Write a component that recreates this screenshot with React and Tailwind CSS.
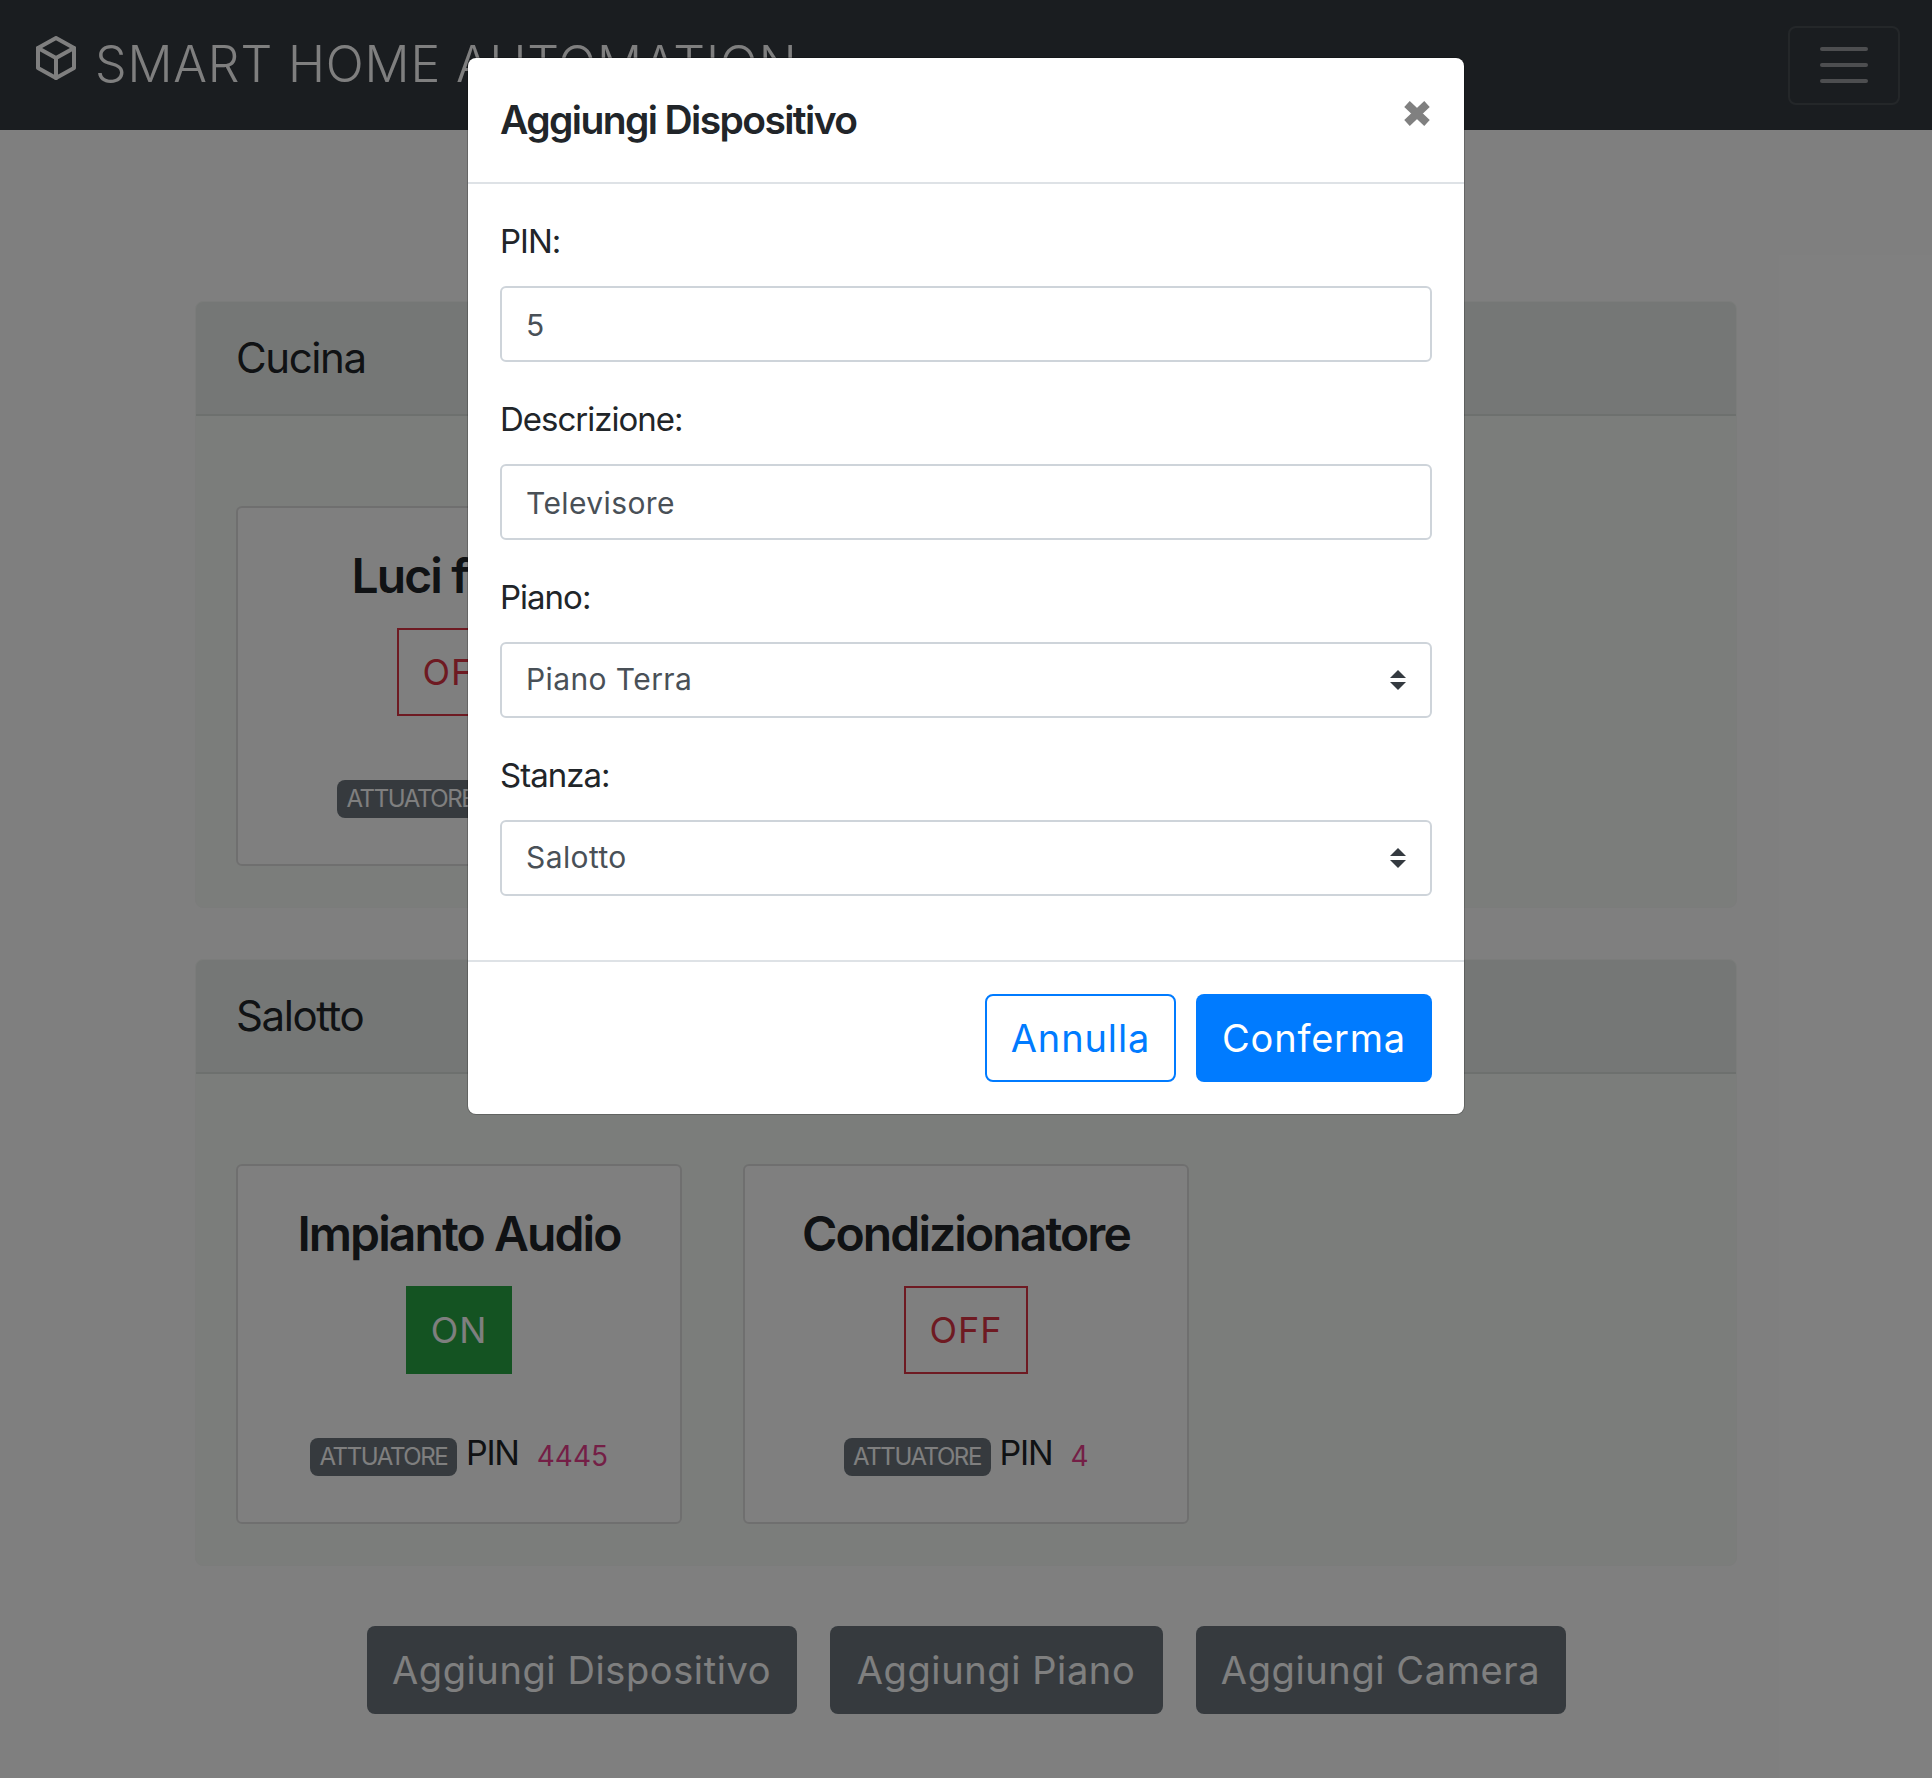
const FONT = { fontFamily: 'Inter, "Noto Sans", sans-serif' }

const ACTIONS = [
  { label: 'Aggiungi Dispositivo', width: 'w-[430px]' },
  { label: 'Aggiungi Piano', width: 'w-[333px]' },
  { label: 'Aggiungi Camera', width: 'w-[370px]' },
]

function CubeIcon() {
  return (
    <svg className="w-[40px] h-[44px]" viewBox="0 0 40 44" fill="none" stroke="currentColor" strokeWidth="4" strokeLinejoin="round" strokeLinecap="round">
      <path d="M20 2L38 12V32L20 42L2 32V12Z" />
      <path d="M2 12L20 22L38 12M20 22V42" />
    </svg>
  )
}

function DeviceCard({ title, on, pin }) {
  return (
    <div className="h-[360px] rounded-[6px] border-2 border-[#dfdfdf] bg-white flex flex-col items-center">
      <h5 className="mt-[38px] h-[60px] text-[48px] leading-[60px] font-semibold tracking-[-1.9px] text-[#212529]">{title}</h5>
      {on ? (
        <button className="mt-[22px] h-[88px] w-[106px] bg-[#28a745] text-white text-[36px] tracking-[1px]">ON</button>
      ) : (
        <button className="mt-[22px] h-[88px] w-[124px] border-2 border-[#dc3545] text-[#dc3545] text-[36px] tracking-[1px]">OFF</button>
      )}
      <div className="mt-[64px] flex items-center text-[#212529]">
        <span className="w-[147px] h-[38px] rounded-[8px] bg-[#6c757d] text-white text-[24px] leading-[38px] text-center tracking-[-1.4px]">ATTUATORE</span>
        <span className="ml-[9px] text-[34px] tracking-[-1.2px] leading-[38px] -mt-[8px]">PIN</span>
        <code className="ml-[18px] -mt-[2px] text-[28px] leading-[38px] text-[#e83e8c]" style={FONT}>{pin}</code>
      </div>
    </div>
  )
}

function Section({ name, children }) {
  return (
    <section className="rounded-[8px] border border-[#f6f8f6] bg-[#f6faf6]">
      <div className="h-[114px] pl-[40px] pb-[2px] flex items-center bg-[#eaefec] border-b-2 border-[#dbe0dd] rounded-t-[7px]">
        <h4 className="text-[42px] tracking-[-1.4px] text-[#212529]">{name}</h4>
      </div>
      <div className="px-[40px] pt-[90px] pb-[41px] grid grid-cols-3 gap-x-[61px]">{children}</div>
    </section>
  )
}

function Field({ label, children }) {
  return (
    <div className="mb-[32px]">
      <label className="block h-[48px] mb-[22px] pt-[1px] text-[33px] leading-[48px] tracking-[-1px] text-[#212529]">{label}</label>
      {children}
    </div>
  )
}

function SelectField({ value }) {
  return (
    <div className="relative">
      <select defaultValue={value} className="block w-full h-[76px] pl-[24px] pb-[2px] rounded-[6px] border-2 border-[#ced4da] bg-white text-[30px] tracking-[0.4px] text-[#495057] appearance-none">
        <option>{value}</option>
      </select>
      <svg className="absolute right-[26px] top-[28px] w-[16px] h-[20px]" viewBox="0 0 16 20">
        <path d="M8 0l8 8H0zM8 20L0 12h16z" fill="#343a40" />
      </svg>
    </div>
  )
}

const inputCls = 'block w-full h-[76px] px-[24px] pt-[2px] rounded-[6px] border-2 border-[#ced4da] bg-white text-[30px] tracking-[0.4px] text-[#495057]'

export default function App() {
  return (
    <div className="relative min-h-[1778px] bg-white overflow-hidden" style={FONT}>
      <nav className="h-[130px] bg-[#343a40] flex items-center justify-between pl-[36px] pr-[32px]">
        <div className="flex items-center text-white">
          <div className="-mt-[14px]"><CubeIcon /></div>
          <span className="ml-[19px] -mt-[2px] text-[50px] font-light tracking-[0.85px]">SMART HOME AUTOMATION</span>
        </div>
        <button className="w-[112px] h-[79px] rounded-[8px] border-2 border-[#ffffff1a] flex flex-col items-center justify-center gap-[12px]">
          <span className="w-[48px] h-[4px] rounded-full bg-[#ffffff80]" />
          <span className="w-[48px] h-[4px] rounded-full bg-[#ffffff80]" />
          <span className="w-[48px] h-[4px] rounded-full bg-[#ffffff80]" />
        </button>
      </nav>

      <main className="pt-[171px] px-[195px]">
        <div className="flex flex-col gap-[51px]">
          <Section name="Cucina">
            <DeviceCard title="Luci forno" pin="3" />
          </Section>
          <Section name="Salotto">
            <DeviceCard title="Impianto Audio" on pin="4445" />
            <DeviceCard title="Condizionatore" pin="4" />
          </Section>
        </div>
        <div className="mt-[60px] flex justify-center gap-[33px]">
          {ACTIONS.map(a => (
            <button key={a.label} className={`${a.width} h-[88px] rounded-[8px] bg-[#6c757d] text-white text-[38px] tracking-[0.6px]`}>{a.label}</button>
          ))}
        </div>
      </main>

      {/* backdrop + modal */}
      <div className="absolute inset-0 bg-black/50" />
      <div className="absolute left-[468px] top-[58px] w-[996px] h-[1056px] rounded-[8px] bg-white shadow-[0_0_0_1px_rgba(0,0,0,0.2)]">
        <div className="h-[126px] px-[32px] border-b-2 border-[#dee2e6] flex items-start justify-between">
          <h5 className="mt-[32px] text-[39px] leading-[60px] font-semibold tracking-[-1.6px] text-[#212529]">Aggiungi Dispositivo</h5>
          <svg className="mt-[43px] -mr-[-2px] w-[26px] h-[25px]" viewBox="0 0 26 25">
            <path d="M3 3L23 22M23 3L3 22" stroke="#808080" strokeWidth="8" />
          </svg>
        </div>
        <div className="px-[32px] pt-[32px] h-[776px]">
          <Field label="PIN:"><input defaultValue="5" className={inputCls} /></Field>
          <Field label="Descrizione:"><input defaultValue="Televisore" className={inputCls} /></Field>
          <Field label="Piano:"><SelectField value="Piano Terra" /></Field>
          <Field label="Stanza:"><SelectField value="Salotto" /></Field>
        </div>
        <div className="border-t-2 border-[#dee2e6] px-[32px] pt-[32px] flex justify-end gap-[20px]">
          <button className="h-[88px] w-[191px] rounded-[8px] border-2 border-[#007bff] text-[#007bff] text-[38px] tracking-[0.9px]">Annulla</button>
          <button className="h-[88px] w-[236px] rounded-[8px] bg-[#007bff] text-white text-[38px] tracking-[0.8px]">Conferma</button>
        </div>
      </div>
    </div>
  )
}
